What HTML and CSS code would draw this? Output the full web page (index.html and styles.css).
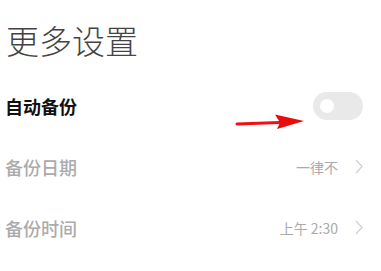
FILE: index.html
```html
<!DOCTYPE html>
<html lang="zh">
<head>
<meta charset="utf-8">
<link rel="stylesheet" href="styles.css">
</head>
<body>
<div class="page">
  <h1 class="title">更多设置</h1>
  <div class="row">
    <span class="label label-on">自动备份</span>
    <span class="toggle"><span class="knob"></span></span>
  </div>
  <div class="row">
    <span class="label label-off">备份日期</span>
    <span class="value">一律不<svg class="chev" width="8" height="15" viewBox="0 0 8 15"><path d="M1 1 L7 7.5 L1 14" fill="none" stroke="#d0d0d0" stroke-width="1.2"/></svg></span>
  </div>
  <div class="row">
    <span class="label label-off">备份时间</span>
    <span class="value">上午 2:30<svg class="chev" width="8" height="15" viewBox="0 0 8 15"><path d="M1 1 L7 7.5 L1 14" fill="none" stroke="#d0d0d0" stroke-width="1.2"/></svg></span>
  </div>
  <svg class="arrow" width="80" height="20" viewBox="0 0 80 20">
    <path d="M3 13 L46 11.5" stroke="#e11" stroke-width="3" stroke-linecap="round" fill="none"/>
    <path d="M41 3.5 L70 10 L43 18 L46 11.5 Z" fill="#e80c0c"/>
  </svg>
</div>
</body>
</html>
```
FILE: styles.css
```css
html, body {
  margin: 0;
  padding: 0;
  background: #ffffff;
}
.page {
  position: relative;
  width: 381px;
  height: 271px;
  padding: 0 18px 0 5px;
  box-sizing: border-box;
  font-family: "Noto Sans CJK SC", "Noto Sans", sans-serif;
}
.title {
  margin: 0;
  padding: 20px 0 0 1px;
  height: 54px;
  box-sizing: border-box;
  font-size: 33px;
  line-height: 40px;
  font-weight: 300;
  color: #444444;
}
.row {
  display: flex;
  align-items: center;
  justify-content: space-between;
  height: 61px;
}
.row:first-of-type {
  margin-top: 21px;
}
.label {
  font-size: 18px;
  line-height: 24px;
}
.label-on {
  color: #111111;
  font-weight: 600;
}
.label-off {
  color: #ababab;
  font-weight: 500;
}
.toggle {
  display: flex;
  align-items: center;
  width: 50px;
  height: 28px;
  border-radius: 14px;
  background: #e9e9e9;
  padding-left: 7px;
  box-sizing: border-box;
}
.knob {
  width: 14px;
  height: 14px;
  border-radius: 50%;
  background: #ffffff;
}
.value {
  display: flex;
  align-items: center;
  gap: 17px;
  font-size: 14px;
  color: #aaaaaa;
}
.chev {
  display: block;
}
.arrow {
  position: absolute;
  left: 234px;
  top: 111px;
}
```
